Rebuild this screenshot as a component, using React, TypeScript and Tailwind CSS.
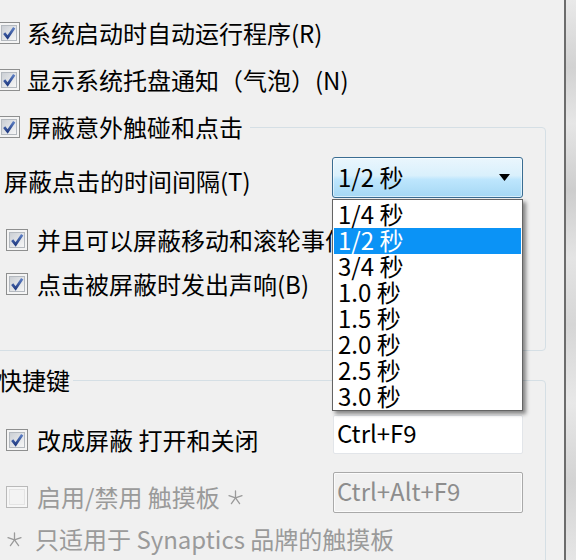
import React from "react";

function CheckBox({ checked, disabled }: { checked?: boolean; disabled?: boolean }) {
  return (
    <svg width="22" height="22" viewBox="0 0 22 22" className="shrink-0">
      <defs>
        <linearGradient id="cbIn" x1="0" y1="0" x2="1" y2="1">
          <stop offset="0" stopColor="#c9cdd3" />
          <stop offset="1" stopColor="#f8f8f8" />
        </linearGradient>
        <linearGradient id="cbChk" x1="0" y1="0" x2="0" y2="1">
          <stop offset="0" stopColor="#5d7fc4" />
          <stop offset="1" stopColor="#243f86" />
        </linearGradient>
      </defs>
      <rect
        x="0.5"
        y="0.5"
        width="21"
        height="21"
        fill={disabled ? "#f6f6f6" : "#f4f4f4"}
        stroke={disabled ? "#b9b9b9" : "#8e8f8f"}
      />
      {disabled ? (
        <rect x="3.5" y="3.5" width="15" height="15" fill="#f3f3f3" stroke="#e4e4e4" />
      ) : (
        <rect x="3.5" y="3.5" width="15" height="15" fill="url(#cbIn)" stroke="#b4b9bf" />
      )}
      {checked && (
        <path
          d="M6.2 11.2 L9.6 15.4 L16.2 5.8"
          fill="none"
          stroke="url(#cbChk)"
          strokeWidth="2.7"
          strokeLinejoin="miter"
        />
      )}
    </svg>
  );
}

function Star() {
  return (
    <svg width="15" height="15" viewBox="0 0 15 15" className="shrink-0">
      <g stroke="#9a9a9a" strokeWidth="1.3" strokeLinecap="round" fill="none">
        <line x1="7.5" y1="7.8" x2="7.5" y2="1" />
        <line x1="7.5" y1="7.8" x2="14" y2="5.6" />
        <line x1="7.5" y1="7.8" x2="1" y2="5.6" />
        <line x1="7.5" y1="7.8" x2="11.6" y2="13.6" />
        <line x1="7.5" y1="7.8" x2="3.4" y2="13.6" />
      </g>
    </svg>
  );
}

const items = ["1/4 秒", "1/2 秒", "3/4 秒", "1.0 秒", "1.5 秒", "2.0 秒", "2.5 秒", "3.0 秒"];

export default function App() {
  return (
    <div className="w-[576px] h-[560px] overflow-hidden flex bg-[#f0f0f0] text-black text-[24px] font-['Noto_Sans_CJK_SC',sans-serif]">
      <div className="w-[564px] h-[560px] overflow-hidden flex flex-col pt-[9px] shrink-0">
        <div className="h-[47px] shrink-0 flex items-center gap-[7px] -ml-[2px] leading-[30px] whitespace-nowrap">
          <CheckBox checked />
          <span>系统启动时自动运行程序(R)</span>
        </div>
        <div className="h-[47px] shrink-0 flex items-center gap-[7px] -ml-[2px] leading-[30px] whitespace-nowrap">
          <CheckBox checked />
          <span>显示系统托盘通知（气泡）(N)</span>
        </div>

        <fieldset className="-ml-[12px] w-[558px] shrink-0 border border-[#d5dfe5] rounded-[4px] pl-[16px] pr-[22px] pb-[44px]">
          <legend className="-ml-[7px] pr-[7px] h-[48px] flex items-center gap-[7px] leading-[30px] whitespace-nowrap">
            <CheckBox checked />
            <span>屏蔽意外触碰和点击</span>
          </legend>

          <div className="mt-[6px] flex items-start">
            <div className="flex-1 mt-[9px] -ml-px leading-[30px] whitespace-nowrap">屏蔽点击的时间间隔(T)</div>
            <div className="relative w-[191px] shrink-0">
              <div className="h-[41px] rounded-[3px] border border-[#3a6d92] bg-[linear-gradient(to_bottom,#eaf6fd_0%,#d9f0fc_45%,#bee6fd_55%,#a5d8f4_100%)] shadow-[inset_0_0_0_1px_rgba(255,255,255,0.55)] flex items-center pl-[5px] pr-[12px] pb-[2px] leading-[30px]">
                <span className="flex-1 whitespace-nowrap">1/2 秒</span>
                <svg width="11" height="7" viewBox="0 0 11 7" className="mt-[2px]">
                  <path d="M0 0 H11 L5.5 7 Z" fill="#000" />
                </svg>
              </div>
              <div className="absolute left-0 top-[42px] z-10 w-[191px] bg-white border border-[#646464] pt-[2px] px-px shadow-[3px_3px_4px_rgba(0,0,0,0.45)]">
                {items.map((t) => (
                  <div
                    key={t}
                    className={
                      t === "1/2 秒"
                        ? "h-[26px] leading-[24px] pl-[4px] whitespace-nowrap bg-[#0b93f6] text-white"
                        : "h-[26px] leading-[24px] pl-[4px] whitespace-nowrap"
                    }
                  >
                    {t}
                  </div>
                ))}
              </div>
            </div>
          </div>

          <div className="mt-[20px] h-[44px] flex items-center gap-[9px] ml-px leading-[30px] whitespace-nowrap">
            <CheckBox checked />
            <span>并且可以屏蔽移动和滚轮事件</span>
          </div>
          <div className="h-[44px] flex items-center gap-[9px] ml-px leading-[30px] whitespace-nowrap">
            <CheckBox checked />
            <span>点击被屏蔽时发出声响(B)</span>
          </div>
        </fieldset>

        <fieldset className="mt-[9px] -ml-[12px] w-[558px] shrink-0 border border-[#d5dfe5] rounded-[4px] pl-[16px] pr-[22px] pb-[30px]">
          <legend className="-ml-[7px] pr-[3px] leading-[40px] whitespace-nowrap">快捷键</legend>

          <div className="mt-[15px] flex items-start">
            <div className="flex-1 mt-[10px] h-[30px] flex items-center gap-[9px] ml-px leading-[30px] whitespace-nowrap">
              <CheckBox checked />
              <span>改成屏蔽 打开和关闭</span>
            </div>
            <div className="w-[190px] h-[39px] shrink-0 bg-white border border-[#e2e5e9] rounded-[2px] flex items-center pl-[3px] pb-[4px] leading-[30px] whitespace-nowrap">
              Ctrl+F9
            </div>
          </div>

          <div className="mt-[17px] flex items-start">
            <div className="flex-1 mt-[10px] h-[30px] flex items-center ml-px leading-[30px] whitespace-nowrap text-[#9a9a9a]">
              <CheckBox disabled />
              <span className="ml-[9px]">启用/禁用 触摸板</span>
              <span className="ml-[8px] flex items-center">
                <Star />
              </span>
            </div>
            <div className="w-[190px] h-[41px] shrink-0 bg-[#f0f0f0] border border-[#a9a9a9] rounded-[2px] shadow-[inset_0_0_0_1px_#fbfbfb] flex items-center pl-[3px] pb-[4px] leading-[30px] whitespace-nowrap text-[#8d8d8d]">
              Ctrl+Alt+F9
            </div>
          </div>

          <div className="mt-[11px] h-[30px] flex items-center ml-[2px] leading-[30px] whitespace-nowrap text-[#9a9a9a]">
            <Star />
            <span className="ml-[13px]">只适用于 Synaptics 品牌的触摸板</span>
          </div>
        </fieldset>
      </div>
      <div className="w-[2px] h-[560px] shrink-0 bg-[#6c6c6c]" />
      <div className="flex-1 h-[560px] bg-[linear-gradient(to_bottom,#e9e9e9_0%,#d2d2d2_12%,#e6e6e6_22%,#cdcdcd_34%,#e4e4e4_46%,#d6d6d6_58%,#e8e8e8_72%,#d3d3d3_86%,#e6e6e6_100%)]" />
    </div>
  );
}
